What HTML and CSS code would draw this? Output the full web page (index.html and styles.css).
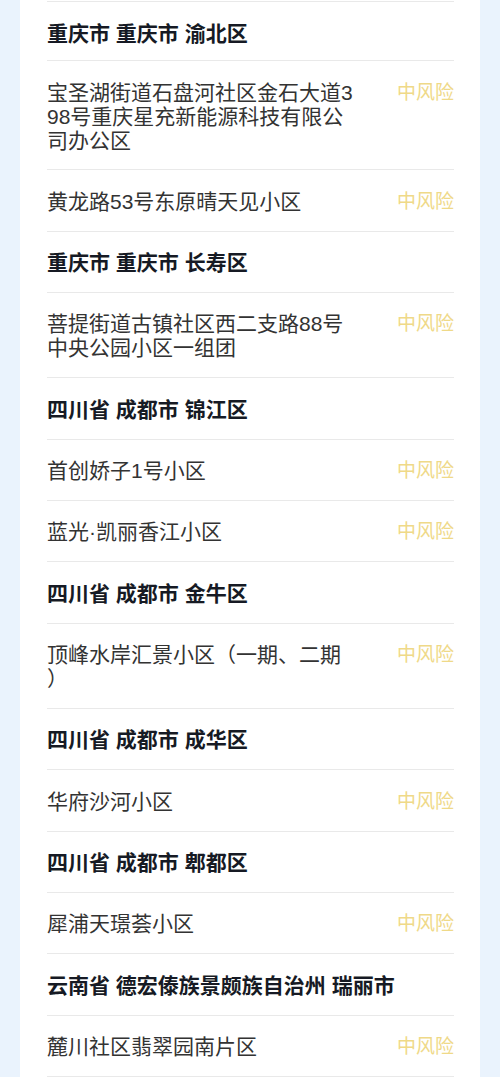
FILE: index.html
```html
<!DOCTYPE html>
<html lang="zh-CN">
<head>
    <meta charset="UTF-8">
    <meta name="viewport" content="width=device-width, initial-scale=1.0">
    <title>中风险地区</title>
    <link rel="stylesheet" href="styles.css">
</head>
<body>
    <div class="card">
        <ul class="lista">
            <li class="regiao">重庆市 重庆市 渝北区</li>
            <li class="local">
                <span class="endereco">宝圣湖街道石盘河社区金石大道398号重庆星充新能源科技有限公司办公区</span>
                <span class="risco">中风险</span>
            </li>
            <li class="local">
                <span class="endereco">黄龙路53号东原晴天见小区</span>
                <span class="risco">中风险</span>
            </li>

            <li class="regiao">重庆市 重庆市 长寿区</li>
            <li class="local">
                <span class="endereco">菩提街道古镇社区西二支路88号中央公园小区一组团</span>
                <span class="risco">中风险</span>
            </li>

            <li class="regiao">四川省 成都市 锦江区</li>
            <li class="local">
                <span class="endereco">首创娇子1号小区</span>
                <span class="risco">中风险</span>
            </li>
            <li class="local">
                <span class="endereco">蓝光·凯丽香江小区</span>
                <span class="risco">中风险</span>
            </li>

            <li class="regiao">四川省 成都市 金牛区</li>
            <li class="local">
                <span class="endereco">顶峰水岸汇景小区（一期、二期<br>）</span>
                <span class="risco">中风险</span>
            </li>

            <li class="regiao">四川省 成都市 成华区</li>
            <li class="local">
                <span class="endereco">华府沙河小区</span>
                <span class="risco">中风险</span>
            </li>

            <li class="regiao">四川省 成都市 郫都区</li>
            <li class="local">
                <span class="endereco">犀浦天璟荟小区</span>
                <span class="risco">中风险</span>
            </li>

            <li class="regiao">云南省 德宏傣族景颇族自治州 瑞丽市</li>
            <li class="local">
                <span class="endereco">麓川社区翡翠园南片区</span>
                <span class="risco">中风险</span>
            </li>
        </ul>
    </div>
</body>
</html>
```

FILE: styles.css
```css
body {
    margin: 0;
    background-color: #eaf3fd;
    font-family: "Liberation Sans", "Noto Sans CJK SC", sans-serif;
    height: 1077px;
    overflow: hidden;
}
.card {
    background-color: #fff;
    margin: 0 20px;
    padding: 1px 26px 40px 27px;
}
.lista {
    list-style: none;
    margin: 0;
    padding: 0;
    border-top: 1px solid #e9e9e9;
}
.lista li {
    padding: 19.5px 0 16.83px;
    border-bottom: 1px solid #e9e9e9;
    line-height: 24px;
}
.lista li:first-child {
    padding-bottom: 14.5px;
}
/* Linha com o nome da província / cidade / distrito */
.regiao {
    font-size: 21px;
    font-weight: bold;
    color: #161a24;
}
.local {
    display: flex;
    justify-content: space-between;
    align-items: flex-start;
}
.endereco {
    width: 312px;
    font-size: 21px;
    color: #333;
    word-break: break-all;
    line-break: anywhere;
}
.risco {
    font-size: 19px;
    color: #efd988;
    white-space: nowrap;
}
```
